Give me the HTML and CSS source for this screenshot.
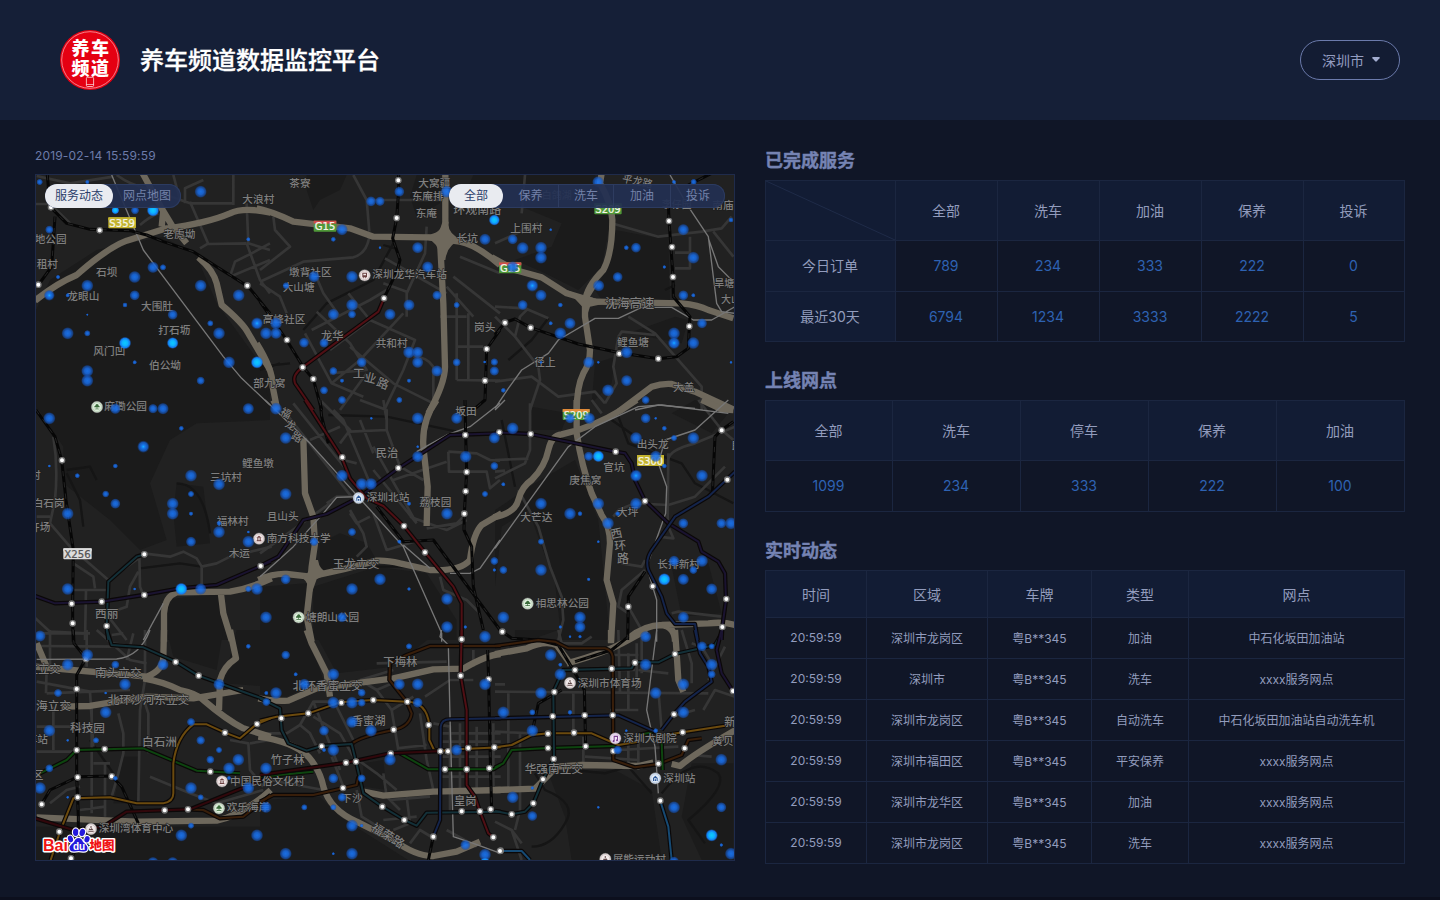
FILE: index.html
```html
<!DOCTYPE html>
<html lang="zh-CN">
<head>
<meta charset="utf-8">
<title>养车频道数据监控平台</title>
<link rel="stylesheet" href="styles.css">
</head>
<body>
<header class="header">
  <svg class="logo" viewBox="0 0 60 60">
    <circle cx="30" cy="30" r="30" fill="#e50012"/>
    <circle cx="30" cy="30" r="28.3" fill="none" stroke="#ffd9dc" stroke-width=".6"/>
    <g class="logo-text"><text x="11.5" y="25.3">养</text><text x="31" y="25.3">车</text><text x="11.5" y="45">频</text><text x="31" y="45">道</text></g>
    <rect x="26.4" y="47.3" width="7.2" height="9.2" rx="1" fill="#e50012" stroke="#fff" stroke-width=".7"/>
    <path d="M26.4 54.5h7.2" stroke="#fff" stroke-width=".6"/>
  </svg>
  <h1 class="title">养车频道数据监控平台</h1>
  <div class="city">深圳市<svg class="caret" viewBox="0 0 8 5"><path d="M.8 0h6.4q1 .3.3 1.2L4.8 4.3q-.8.7-1.6 0L.5 1.2Q-.2.3.8 0z" fill="#a3add0"/></svg></div>
</header>
<main class="main">
  <section class="left">
    <div class="date">2019-02-14 15:59:59</div>
    <div class="mapbox">
      <svg class="map" id="map" viewBox="36 175 698 685"></svg>
      <div class="pills">
        <div class="pill"><span class="on w68">服务动态</span><span class="w68">网点地图</span></div>
        <div class="pill"><span class="on w54">全部</span><span class="w55">保养</span><span class="w55 sep">洗车</span><span class="w57 sep">加油</span><span class="w55 sep">投诉</span></div>
      </div>
    </div>
  </section>
  <section class="right">
    <h2>已完成服务</h2>
    <div class="grid orders">
      <div class="h corner"><svg class="diag" viewBox="0 0 129 59"><path d="M0 0L129 59" stroke="#1f2b48"/></svg></div><div class="h">全部</div><div class="h">洗车</div><div class="h">加油</div><div class="h">保养</div><div class="h">投诉</div>
      <div class="h">今日订单</div><div>789</div><div>234</div><div>333</div><div>222</div><div>0</div>
      <div class="h">最近30天</div><div>6794</div><div>1234</div><div>3333</div><div>2222</div><div>5</div>
    </div>
    <h2>上线网点</h2>
    <div class="grid shops">
      <div class="h">全部</div><div class="h">洗车</div><div class="h">停车</div><div class="h">保养</div><div class="h">加油</div>
      <div>1099</div><div>234</div><div>333</div><div>222</div><div>100</div>
    </div>
    <h2>实时动态</h2>
    <div class="grid live">
      <div class="h">时间</div><div class="h">区域</div><div class="h">车牌</div><div class="h">类型</div><div class="h">网点</div>
      <div>20:59:59</div><div>深圳市龙岗区</div><div>粤B**345</div><div>加油</div><div>中石化坂田加油站</div>
      <div>20:59:59</div><div>深圳市</div><div>粤B**345</div><div>洗车</div><div>xxxx服务网点</div>
      <div>20:59:59</div><div>深圳市龙岗区</div><div>粤B**345</div><div>自动洗车</div><div>中石化坂田加油站自动洗车机</div>
      <div>20:59:59</div><div>深圳市福田区</div><div>粤B**345</div><div>平安保养</div><div>xxxx服务网点</div>
      <div>20:59:59</div><div>深圳市龙华区</div><div>粤B**345</div><div>加油</div><div>xxxx服务网点</div>
      <div>20:59:59</div><div>深圳市龙岗区</div><div>粤B**345</div><div>洗车</div><div>xxxx服务网点</div>
    </div>
  </section>
</main>
<script src="map.js"></script>
</body>
</html>
```
FILE: styles.css
```css
* { box-sizing: border-box; }
body {
  margin: 0;
  height: 900px;
  overflow: hidden;
  background: #101627;
  color: #929cbd;
  font-family: Inter, "Noto Sans CJK SC", sans-serif;
  border-bottom: 3px solid #0c0f1d;
}
.header {
  height: 120px;
  padding: 0 40px 0 60px;
  display: flex;
  align-items: center;
  background: #151f37;
}
.logo { width: 60px; height: 60px; }
.logo-text { font: 900 18px "Noto Sans CJK SC", sans-serif; fill: #fff; }
.title {
  margin: 0 auto 0 20px;
  padding-top: 2px;
  font-size: 24px;
  line-height: 36px;
  font-weight: 500;
  -webkit-text-stroke: .3px #fff;
  color: #fff;
}
.city {
  width: 100px;
  height: 40px;
  padding: 0 0 1px 21px;
  display: flex;
  align-items: center;
  gap: 8px;
  border: 1px solid #6b7aab;
  border-radius: 20px;
  background: #131c33;
  font-size: 14px;
  color: #939dc0;
}
.caret { width: 8px; height: 5px; }
.main { display: flex; gap: 30px; padding: 20px 35px 0; }
.left { width: 700px; }
.date { height: 34px; line-height: 31px; font-size: 12px; letter-spacing: .16px; color: #6c7ba9; }
.mapbox {
  display: grid;
  height: 687px;
  border: 1px solid #1f2b4b;
  background: #212121;
}
.mapbox > * { grid-area: 1 / 1; }
.map { display: block; width: 698px; height: 685px; }
.pills {
  z-index: 1;
  display: flex;
  justify-content: space-between;
  align-items: flex-start;
  padding: 9px;
}
.pill {
  display: flex;
  height: 24px;
  border-radius: 12px;
  background: rgba(34, 47, 82, .93);
  box-shadow: inset 0 0 0 1px #2c3b60;
  font-size: 12px;
  line-height: 23px;
  text-align: center;
  color: #7381a9;
}
.on { border-radius: 12px; background: #e9ebf0; color: #2c3e6b; }
.sep { border-left: 1px solid #2e3c60; }
.w54 { width: 54px; }
.w55 { width: 55px; }
.w57 { width: 57px; }
.w68 { width: 68px; }
.right { width: 640px; }
h2 {
  margin: 0;
  height: 40px;
  line-height: 41px;
  font-size: 18px;
  font-weight: 700;
  -webkit-text-stroke: .4px #7583b3;
  color: #7583b3;
}
.grid {
  display: grid;
  gap: 1px;
  padding: 1px;
  margin-bottom: 18px;
  background: #1b2640;
  font-size: 14px;
  color: #2e62b2;
}
.grid > div {
  display: flex;
  align-items: center;
  justify-content: center;
  padding: 0 1px 1px 0;
  background: #101627;
}
.grid > .h { padding-bottom: 2px; background: #121c34; color: #929cbd; }
.grid > .corner { padding: 0; }
.diag { width: 100%; height: 100%; }
.orders { grid-template-columns: 129px 101px 101px 101px 101px 100px; grid-template-rows: 59px 50px 49px; }
.shops { grid-template-columns: 126px repeat(4, 127px); grid-template-rows: 59px 50px; }
.live {
  grid-template-columns: 100px 120px 103px 96px 215px;
  grid-template-rows: 46px repeat(6, 40px);
  font-size: 12px;
  color: #929cbd;
}
.live > div { padding: 0 0 2px; }
.live > .h { padding: 0; font-size: 14px; }
.label { font-family: "Noto Sans CJK SC", sans-serif; font-weight: 500; fill: #7f7f7f; stroke: #1b1b1b; paint-order: stroke; stroke-width: 3px; }
.shield-text { font: 29px "DejaVu Sans", sans-serif; text-anchor: middle; stroke-width: .7px; }
.baidu { font-family: "Liberation Sans", "Noto Sans CJK SC", sans-serif; font-weight: 700; fill: #f01414; stroke: #fff; stroke-width: 3px; paint-order: stroke; stroke-linejoin: round; }
```
FILE: map.js
```js
const root = document.getElementById('map');
const NS = 'http://www.w3.org/2000/svg';
function el(name, attrs, parent) {
  const node = document.createElementNS(NS, name);
  for (const k in attrs) node.setAttribute(k, attrs[k]);
  (parent || root).appendChild(node);
  return node;
}
const defs = el('defs', {});
defs.innerHTML = `
<radialGradient id="d0"><stop offset="0" stop-color="#1a76f2" stop-opacity=".92"/><stop offset=".45" stop-color="#1869e0" stop-opacity=".88"/><stop offset=".8" stop-color="#1555bc" stop-opacity=".62"/><stop offset="1" stop-color="#0d3b90" stop-opacity="0"/></radialGradient>
<radialGradient id="d1"><stop offset="0" stop-color="#16b4ff"/><stop offset=".25" stop-color="#1779f0"/><stop offset=".7" stop-color="#155cc8" stop-opacity=".85"/><stop offset="1" stop-color="#0d3b90" stop-opacity="0"/></radialGradient>
<radialGradient id="d2"><stop offset="0" stop-color="#0dcbff"/><stop offset=".45" stop-color="#0fb0ff"/><stop offset=".75" stop-color="#1480f8" stop-opacity=".95"/><stop offset="1" stop-color="#1458c0" stop-opacity="0"/></radialGradient>`;

// Tiles are drawn at three units per pixel, from these origins.
const origin = {A:[30,170],B:[260,170],C:[495,170],D:[30,400],E:[260,400],F:[495,400],G:[30,630],H:[260,630],I:[495,630]};
const place = t => `translate(${origin[t]}) scale(.33333)`;

function layer(data, attrs) {
  for (const t in data) el('path', Object.assign({d: data[t], transform: place(t), fill: 'none', 'stroke-linejoin': 'round'}, attrs));
}

el('rect', {x: 36, y: 175, width: 698, height: 685, fill: '#212121'});
const hills = {
  A:'M18 420L60 330L200 240L270 225L400 200L500 260L560 400L720 620L720 720L18 720ZM380 215L500 250L485 300L455 280L430 310Z',
  B:'M140 15L260 15L240 60L180 90L160 120L140 60ZM470 15L540 15L540 100L470 140L450 80ZM640 15L720 15L720 110L620 60ZM0 600L30 700L0 720Z',
  C:'M0 15L300 15L345 160L320 290L250 360L150 310L60 270L170 230L200 160L80 110L0 100ZM360 180L470 200L520 200L525 400L320 390L300 360L345 280ZM540 440L580 450L560 520L400 490ZM300 580L360 560L350 640L290 700Z',
  D:'M18 0L720 0L720 60L500 70L420 120L360 250L410 420L330 450L240 360L100 250L100 140L20 20ZM440 250L520 260L540 430L440 440L430 340ZM400 600L560 580L600 720L410 720Z',
  E:'M180 430L240 400L320 430L350 480L180 520ZM160 560L350 500L500 520L590 660L590 720L160 720ZM0 560L140 550L130 720L0 720Z',
  F:'M0 330L120 250L240 180L310 360L330 560L345 720L200 720L180 550L100 330L20 380L0 560ZM110 20L220 40L200 90L110 90ZM530 40L600 0L700 40L650 100ZM530 500L640 490L680 640L560 650Z',
  G:'M620 0L720 0L720 170L580 160ZM410 0L580 0L560 120L430 80ZM280 380L330 380L320 520L250 520ZM18 590L720 590L720 700L18 700Z',
  H:'M0 0L140 0L190 150L80 200L0 200ZM160 0L540 0L400 110L230 130ZM310 400L370 390L380 480L310 470ZM0 510L180 500L240 560L460 700L0 700Z',
  I:'M60 0L190 0L120 25L60 25ZM160 430L360 420L470 480L500 690L230 690L210 560ZM300 500L440 520L410 590L340 570ZM590 400L715 400L715 690L620 690L560 560Z'
};
layer(hills, {fill: '#1b1b1b'});
layer({B:'M130 480L200 400L340 330L400 220M0 600L60 580M370 225L405 235M0 590L90 580', C:'M160 445L110 510L40 570M540 345L510 360', D:'M110 220L150 300L160 380M330 505L450 490L515 500M110 210L180 200L200 240M440 250Q520 250 540 400', E:'M205 45L380 50L590 95M350 500L500 500', F:'M20 60L60 260M370 50L400 130L560 190L600 250L715 310M350 60L480 150', G:'M180 330L250 430', I:'M120 430L150 480Q250 520 210 580Q170 650 110 650M240 420L330 430L400 410L470 490M500 490Q590 370 670 430Q700 470 580 570L630 640'}, {stroke: '#151515', 'stroke-width': 7});

layer({
  A:'M260 15Q300 45 350 55L480 100L610 100M610 15L610 105M465 100L465 55L520 30M480 95L535 222L650 220M430 15L450 90M600 320L615 275L665 250L720 220M535 220L510 235M650 100L655 220L720 240M650 220L690 330L720 370M600 320L720 270M18 102L60 102L120 160M330 165Q360 140 385 130M20 18L120 40L250 20',
  B:'M280 15L320 90L328 185M330 90L540 90M328 200Q320 250 280 262L130 275L0 335M40 140L45 180L90 230L0 300M160 300L190 370L240 440M375 265L490 330L560 370M500 170L495 250L440 370L440 440M265 370L330 450L465 510L430 600L375 715M155 480L330 390L380 360M170 425L270 520L320 600L210 610M135 490L215 640L310 680M215 640L300 570L430 430M330 450L210 540M270 530L400 640L520 700M460 560Q500 560 520 590L520 720M590 530L670 530M590 630L720 632M590 370L590 630M625 430L625 630M560 350L640 440M600 260L720 310M580 320L720 430M540 440L620 440M320 610L240 720M0 340L60 380L80 430M440 365L370 340',
  C:'M90 15L80 130M0 220L130 160M350 160L490 200L620 185L680 175L710 140M655 185L715 260M585 200L585 295L540 295M540 248L585 248M0 410L90 415L160 445M60 500L75 440L100 415M0 440L60 500L130 590L135 630L105 720M0 635L110 620L190 680L300 665L330 700M370 500L380 485L480 495M370 500L355 590L365 640L330 700M400 440L480 490L620 650L620 720',
  D:'M70 110Q85 200 75 300L60 370L120 440L235 540L340 465M60 350L20 350M130 490L190 530L195 565M120 570L235 570M168 570L165 720M0 640L60 695L168 700M328 465L330 560L340 585M340 460L420 470L460 455L500 475L515 500L515 560M515 500L560 490L600 470M325 515L300 560L290 620L235 640M235 650L290 720M245 705L280 700M600 470L725 440',
  E:'M70 30L290 310M100 10L260 210M150 120L240 80M180 0L270 90L240 130M300 0L380 30L380 90L420 200L490 240M220 30L250 60L330 250M270 95L380 90M300 60L340 160M290 190L250 180M370 0L380 60M340 140L470 370M450 350L560 390L620 360M200 310L230 290L300 290M270 330L310 400L320 440L290 470M270 340L290 370L330 350M340 340L380 450L480 420M565 155L650 160L690 180L720 182M565 155L567 215L680 215L690 265L720 240M400 240L560 185M340 210L470 370M210 310L0 460M500 385L590 370L620 340M540 530L550 570L620 600L660 640',
  F:'M105 10L105 150L90 190L0 235M0 180L100 176M0 215L30 212M70 270L130 380L165 500L200 590L205 660L190 720M290 0L320 40M610 0L680 90L715 120M380 490L440 500L450 480M450 510L380 570L370 620L400 640M355 350L370 330L420 310L520 315L600 290L690 200M520 380L535 415L490 410M520 160L518 360M520 180Q520 150 600 130L720 80M400 620L440 690M530 640L550 635L680 650',
  G:'M20 10L180 10M20 48L260 50M60 0L60 110M170 0L170 110M200 0L245 40L320 50M245 40L300 90L350 100M20 155L180 185L300 180M50 110L48 190M50 190L180 185L190 350M185 230L185 550M20 290L190 290M70 230L70 360M265 250L280 310L280 370L265 430L245 500M345 0L345 150L330 240L325 520M345 220L355 250L355 370M20 365L140 365M360 440L480 490L560 520L700 480M190 400L240 400M60 520L110 480L150 470M150 540L225 530M600 330L655 340L660 420L700 470M660 340L720 330M225 400L225 560M290 90L310 10',
  H:'M0 310L80 310L120 285L160 215L210 215M120 285L150 310L180 370M160 215L240 420M220 210L280 330M160 260L240 310L280 380L350 430L410 480M300 150L350 180L395 240L415 360M395 240L460 200M350 180L420 150M495 200L570 150L640 150M520 280L570 290L570 550M600 280L600 480M650 290L650 480M700 280L700 480M540 310L722 310M540 335L722 335M540 380L722 380M540 440L722 440M410 355L500 345M480 250L500 390L520 480M370 430L380 500L420 540M390 510L510 500M440 500L450 580L400 600M370 570L470 560M450 640L480 600L530 630M560 600L650 650M350 100L560 95M640 60L640 110M30 450L190 480M290 480L305 560L370 600M300 150L400 120M215 380L250 470',
  I:'M0 185L640 190M0 163L30 163M40 190L40 480M190 0L200 40L260 40L290 20M370 0L375 190M400 70L400 240M425 40L425 180M440 0L440 130M350 75L430 75M345 120L420 120M345 240L430 240M235 190L235 320M75 305L75 540L60 600M430 120L520 130M490 180L500 300M590 40L620 50L650 100M560 0L590 100L590 160M625 240L660 180L720 200M640 150L690 50M400 330L400 400M430 330L430 420M370 360L550 350M590 375L650 380M0 305L110 310M270 380L430 390M0 575L50 600L80 640M50 600L80 690M530 260L600 240M265 320L265 405'
}, {stroke: '#363636', 'stroke-width': 8});

layer({
  A:'M15 392Q80 340 140 315Q230 235 290 212L410 175Q530 160 600 130Q640 110 722 128M338 10L395 115L425 165L470 220M400 120L395 170M505 262Q550 300 560 340L575 405Q640 460 655 490L720 600',
  B:'M-10 115Q40 125 100 155L270 175L340 200L505 202L600 215Q650 225 720 285M556 10L556 160L540 210L550 400L555 590Q555 640 505 730M-10 520Q40 600 38 650L52 720',
  C:'M-10 262L60 300L140 322L215 370L300 395L560 400Q610 405 640 420L715 445M320 10L315 40Q350 100 352 150Q352 250 325 300Q275 350 270 395L270 440L285 540Q285 580 265 610Q245 650 245 725M370 725L470 650Q500 640 530 642L600 665L715 718',
  D:'M402 725L402 640Q405 590 440 577L600 575Q660 565 725 535M572 575L580 640L605 722',
  E:'M40 0L50 20M130 115L135 280L160 350L165 430L155 500L150 560L140 650L155 725M-5 540Q40 520 80 522L150 530Q250 510 350 482Q380 480 420 490L510 510Q600 515 630 480Q640 400 665 375L725 340M530 0Q485 60 490 140L503 260L500 378',
  F:'M-5 352Q60 340 70 300Q80 260 110 240Q150 200 160 150Q170 105 200 103L250 90Q340 60 425 0M245 0L245 100Q260 200 290 280L320 345Q345 380 345 430L335 540L355 610L348 725M620 0L680 28L715 30M400 715Q450 675 500 675L640 670Q690 665 720 675M500 675Q540 680 540 725',
  G:'M20 40L50 110M15 110L350 140Q400 120 400 80L402 0M340 145Q400 155 450 180Q500 190 520 210Q590 270 640 295L722 320M95 230L180 228L350 200L490 205L640 180M600 0L618 85Q580 110 570 150L567 240M20 562L320 575L560 572Q640 555 722 480',
  H:'M140 0L155 40L200 130L210 200M-5 205Q40 215 85 212L170 175L400 145L520 118L610 116Q680 75 722 72M-5 320Q100 335 145 380Q180 420 190 470Q210 540 290 575L400 630Q470 680 520 678L590 665L660 635M310 485L370 497L520 485L722 480',
  I:'M0 72L95 55Q150 30 185 45L225 100M215 100Q330 70 400 30L455 0M348 0L348 40M540 0L545 70L550 150L565 185M0 480L120 476L185 410L260 405L430 408L475 398M530 402L555 408Q600 370 722 300'
}, {stroke: '#6e685c', 'stroke-width': 19});
layer({B:'M500 195Q545 190 548 155L566 155Q560 190 605 210Q562 220 556 270L540 270Q540 220 500 205Z', C:'M215 360L262 378L310 340L285 380L340 398L285 410L272 450L262 410Z', E:'M130 530Q150 520 156 480L174 480Q178 510 205 520L170 538L155 580L146 580Q148 550 130 536Z'}, {fill: '#6e685c'});

const thin = {
  A:'M245 15L340 240L580 560L635 625L720 705',
  C:'M720 430L680 425L665 400L640 200L580 110L525 15M640 205L670 290L720 340M0 715L40 655L80 600L160 550L190 510L300 445L370 445L440 412L530 412L595 450L650 450L720 410M420 720L490 705L600 715',
  D:'M340 720L400 610',
  E:'M15 0L150 130L430 440L545 700L545 725M290 290L230 292L190 340L100 440L0 530M430 435L510 505M570 520L630 520L660 505L720 420M470 155L560 105L630 80L720 10',
  F:'M0 445L220 140L300 80L430 20L500 15L700 40M700 0L600 90L510 120L490 190L515 260L512 340L455 500L485 600L485 725M0 30L30 0',
  G:'M360 0Q330 80 260 87L20 88', H:'M545 0L540 20L565 45L570 260L580 620L640 640L722 670', I:'M485 0L455 240L480 350L490 490'
};
layer(thin, {stroke: '#777', 'stroke-width': 4});
const rail = {
  A:'M52 15L60 110L110 160L180 178L300 182L350 195L400 215L490 245L560 290L655 350L720 430M75 140L65 290L25 345',
  B:'M416 15L416 60L410 145L398 205L420 270L412 300L372 385M0 395L80 510L130 592L160 628L185 720M720 480L680 537L675 690L640 720',
  C:'M520 100L522 150L534 320L535 380L585 440L583 468L580 535L545 560L490 566L373 548L250 522L107 473L60 447L30 457L0 495M580 45L650 10',
  D:'M18 30L75 110L95 180L108 300L130 450L128 610L128 670L130 725',
  E:'M180 0L185 50L205 130M615 0L617 105L620 215L613 340L612 390L635 440L640 560L670 690M350 320L430 425L520 420L720 690',
  F:'M715 65L680 90L660 110L652 285M450 515L400 590L398 720',
  G:'M130 0L132 40L168 85L140 135L140 440L145 560L145 600M35 522L60 480L145 440L245 438L275 470L325 580M123 685L150 640',
  H:'M683 60L686 150L690 350L695 540M520 620L505 690',
  I:'M22 5L50 25L130 30L190 45L235 120M240 95L350 60L400 20M200 180L130 220L115 290M235 120L268 180L272 350'
};
layer(rail, {stroke: '#060606', 'stroke-width': 9});
layer(rail, {stroke: '#242424', 'stroke-width': 3, 'stroke-dasharray': '16 18'});

const metro = [
  ['#381e0a', {G:'M470 538L520 540L570 565L640 560L722 495', H:'M0 515L40 495L160 495L290 465L295 440M275 342Q300 320 400 300Q450 290 455 250L440 215L388 150L390 100L440 75L510 48L722 48', I:'M0 48L130 30L180 35L220 55L330 55Q350 60 353 80L355 390L420 412L490 402L560 375L580 330L620 325'}],
  ['#0d450f', {G:'M30 430L110 390L140 360L340 355L500 422L630 430', H:'M0 440L160 425M420 370L505 418L700 418L722 405', I:'M0 412L25 400L50 360L160 354L360 348M430 315L480 305M500 340L503 420'}],
  ['#6b4a0e', {G:'M62 690L90 605L130 505L240 502L320 520L400 520Q430 515 430 490L430 400Q440 320 490 283L530 283L585 308L630 325L680 282L722 265', H:'M0 272L50 260L145 250L240 217L340 210L440 215Q500 215 508 285L508 330L522 360L565 362M590 358L722 352', I:'M0 352L50 345L110 315L160 310L290 310L370 345L430 335M480 320L563 307L690 287'}],
  ['#31070b', {G:'M15 565L130 600L220 590L290 545L480 538L722 440', H:'M0 435L260 398L390 370L550 363'}],
  ['#133038', {D:'M343 463L320 470L235 545L230 680L235 720', G:'M230 0L245 45L340 52L437 95L505 137L722 215', H:'M0 205L60 235L65 300L85 340L140 362L185 348L275 342L288 395L310 490L367 530L433 570L470 587L500 548L722 545', I:'M0 543L50 553L90 545L115 520L145 447L177 387L175 185L205 120L410 115L420 97L490 97L540 72L660 45L680 10'}],
  ['#1a1330', {D:'M15 588L75 610L215 605L340 585L450 565L560 555L722 485', E:'M0 498L55 470L130 360L200 342L295 293L415 205L570 105L720 100', F:'M0 97L107 102L362 155L390 160L410 190L420 240L450 302L520 370L610 425L620 455L670 485L690 520L693 600L682 680L680 720', I:'M680 0L665 60L680 130L715 185'}],
  ['#14244b', {F:'M720 215L640 290L540 350L470 450Q450 480 460 510L500 590L515 640L540 672L600 672L608 720', H:'M520 620L540 570L542 290Q545 268 570 268L722 265', I:'M0 265L370 256L480 305M500 300L537 252L570 215L650 155L640 110L615 70L600 0'}],
  ['#500f14', {B:'M372 385L355 425L205 535L128 592Q95 615 105 640L160 720', E:'M135 0L245 172L270 235L320 295L370 318L432 378L495 457L580 560L605 610L605 725', H:'M605 0L602 136L620 240L620 465L645 500L660 545L685 610L700 622'}],
  ['#164a73', {I:'M495 510L520 590L530 690M15 663L80 663L105 690'}]
];
for (const [color, data] of metro) {
  layer(data, {stroke: '#0b0808', 'stroke-width': 13});
  layer(data, {stroke: color, 'stroke-width': 6});
}

const stations = {
  A:'63,112 209,181 25,344 652,347', B:'415,31 410,144 372,385 81,510 128,592 160,627 680,537 675,632',
  C:'522,153 531,231 534,321 583,469 490,566 373,551 107,473 30,458', D:'96,181 343,463 343,585 692,498 125,611 215,605 128,670 230,678',
  E:'247,172 415,204 432,378 495,457 616,105 620,216 617,274 613,341 605,718', F:'13,97 107,102 362,155 450,303 697,239 680,91 473,559 400,620 694,597 682,681 22,695',
  G:'168,87 437,96 506,137 140,177 140,360 224,357 143,442 245,439 35,523 143,502 88,605 404,541 474,538 585,308 681,282 541,425 123,685',
  H:'602,137 686,148 244,218 340,210 442,215 64,265 145,250 401,299 506,285 185,349 392,371 258,398 288,395 541,364 564,364 625,354 703,352 555,418 620,418 688,415 249,474 367,530 433,570 605,544 660,544 692,538 520,620 700,622 722,662',
  I:'540,72 420,98 240,120 350,116 178,186 173,259 269,256 353,256 537,253 714,183 159,311 237,308 563,307 159,354 272,349 355,363 569,355 176,387 144,448 490,401 115,520 50,553 496,512 15,663'
};
for (const t in stations) {
  const g = el('g', {transform: place(t)});
  for (const p of stations[t].split(' ')) {
    const [cx, cy] = p.split(',');
    el('circle', {cx, cy, r: 8, fill: '#fff', stroke: '#777', 'stroke-width': 4}, g);
  }
}

// left edge, vertical centre, text, size, rotation
const labels = {
  A:[[637,86,'大浪村',32],[400,193,'老虎坳',32],[14,206,'地公园',32],[20,281,'租村',32],[198,307,'石坝',32],[112,378,'龙眼山',32],[333,407,'大围肚',32],[385,479,'打石坜',32],[190,543,'风门凹',32],[357,584,'伯公坳',32]],
  B:[[88,40,'茶寮',32],[475,40,'大窝疆',32],[455,78,'东庵排',32],[467,129,'东庵',32],[580,118,'环观南路',36],[590,204,'长坑',32],[87,307,'墩背社区',32],[68,351,'大山塘',32],[337,313,'深圳龙华汽车站',32],[8,446,'高峰社区',32],[183,498,'龙华',34],[347,520,'共和村',32],[642,470,'岗头',32],[-20,639,'部九窝',32],[586,722,'坂田',32]],
  C:[[382,24,'平龙路',31,12],[140,75,'白鸽湖',30],[500,102,'李仔园',30],[652,104,'南庙',32],[46,173,'上围村',32],[330,400,'沈海高速',37],[658,341,'旱塘',30],[678,388,'大山',30],[366,516,'鲤鱼塘',32],[118,575,'径上',32],[534,650,'大盖',32]],
  D:[[223,19,'麻磡公园',32],[0,225,'村',32],[636,190,'鲤鱼墩',32],[540,231,'三坑村',32],[8,310,'白石岗',32],[-3,381,'开场',32],[560,364,'福林村',32],[596,458,'木运',32],[195,642,'西丽',35]],
  E:[[347,159,'民治',34],[20,348,'且山头',32],[20,414,'南方科技大学',32],[320,292,'深圳北站',32],[478,306,'荔枝园',32],[218,491,'玉龙立交',35],[138,650,'塘朗山公园',32],[64,32,'福',32,28],[78,68,'龙',32,28],[96,104,'路',32,28]],
  F:[[425,133,'出头龙',32],[325,200,'官坑',32],[223,240,'庚焦窝',32],[76,350,'大芒达',32],[366,336,'大坪',32],[346,404,'西',36,-12],[358,439,'环',36,-6],[366,475,'路',36]
  ,[487,493,'长排新村',32],[122,609,'相思林公园',32],[708,134,'良',32]],
  G:[[-10,116,'立立交',34],[195,129,'南头立交',35],[233,208,'北环沙河东立交',35],[18,228,'海立交',35],[120,294,'科技园',35],[-10,326,'车站',32],[336,335,'白石洲',35],[5,433,'区',35],[600,452,'中国民俗文化村',32],[590,532,'欢乐海岸',32],[206,594,'深圳湾体育中心',32]],
  H:[[370,96,'下梅林',34],[98,167,'北环香蜜立交',35],[275,274,'香蜜湖',34],[32,391,'竹子林',34],[244,504,'下沙',32],[582,513,'皇岗',34],[338,588,'福荣路',36,32]],
  I:[[248,158,'深圳市体育场',32],[385,323,'深圳大剧院',32],[505,443,'深圳站',32],[89,415,'华强南立交',35],[353,686,'展能运动村',32],[688,275,'新',34],[652,332,'黄贝岭',32]]
};
for (const t in labels) {
  const g = el('g', {transform: place(t), class: 'label'});
  for (const [x, y, s, size, rot] of labels[t]) {
    const node = el('text', {x, y: y + size * .36, 'font-size': size}, g);
    if (rot) node.setAttribute('transform', `rotate(${rot} ${x} ${y})`);
    node.textContent = s;
  }
}
const road = el('g', {transform: place('B'), class: 'label'});
for (const [x, y, s, r] of [[278,610,'工',0],[314,620,'业',14],[352,634,'路',22]])
  el('text', {x, y: y + 13, 'font-size': 36, transform: `rotate(${r} ${x} ${y})`}, road).textContent = s;

const shields = [['A',235,142,83,'S359','#c3b32e','#c3b32e'],['B',161,152,68,'G15','#d24b4b','#4f9838'],['C',12,277,67,'G15','#d24b4b','#4f9838'],['C',298,100,82,'S209','#4f9838','#4f9838'],['F',203,27,81,'S209','#e08a38','#4f9838'],['F',426,165,81,'S300','#c3b32e','#c3b32e'],['D',100,445,85,'X256','#ddd','#ddd']];
for (const [t, x, y, w, s, top, main] of shields) {
  const g = el('g', {transform: place(t)});
  el('rect', {x, y, width: w, height: 33, rx: 3, fill: main}, g);
  el('rect', {x, y, width: w, height: 9, fill: top}, g);
  const ink = s === 'X256' ? '#555' : '#f5f5e8';
  el('text', {x: x + w / 2, y: y + 29, textLength: w - 6, lengthAdjust: 'spacingAndGlyphs', class: 'shield-text', fill: ink, stroke: ink}, g).textContent = s;
}

const glyph = {
  park: ['#3a6b3a', '#dfeedd', 'M-7 7H7V5H-7ZM-1 5V1H-8Q-9-3-5-4Q-4-9 0-9Q5-9 5-4Q9-3 8 1H1V5Z'],
  metro: ['#2b5797', '#dfe9f5', 'M-7 8V-1L0-8L7-1V8H4V0H-4V8ZM-2 3H2V8H-2Z'],
  bus: ['#6a4040', '#f0e6e6', 'M-7-8H7V6H4V9H2V6H-2V9H-4V6H-7ZM-4-5V0H4V-5Z'],
  sport: ['#5c4444', '#f2ebeb', 'M-8 5H8V8H-8ZM-7 3L-4-2L-1 1L2-3L7 3ZM-2-8H2V-4H-2Z'],
  museum: ['#6a4040', '#f0e6e6', 'M-8-3L0-9L8-3ZM-7 5H7V8H-7ZM-6-2H-4V5H-6ZM-1-2H1V5H-1ZM4-2H6V5H4Z'],
  music: ['#7a3f8f', '#f0e3f5', 'M-4-8H8V5A3 3 0 1 1 5 3V-4H-2V7A3 3 0 1 1-5 5V-8Z']
};
for (const [t, x, y, kind] of [['B',314,316,'bus'],['D',201,21,'park'],['E',116,652,'park'],['F',98,611,'park'],['G',567,535,'park'],['E',296,294,'metro'],['I',481,445,'metro'],['D',687,416,'museum'],['G',576,454,'museum'],['G',183,597,'sport'],['I',225,159,'sport'],['I',331,687,'sport'],['I',361,325,'music']]) {
  const g = el('g', {transform: `${place(t)} translate(${x} ${y})`});
  const [ink, paper, d] = glyph[kind];
  el('circle', {r: 17, fill: paper, stroke: '#8a8a8a', 'stroke-width': 1.5}, g);
  el('circle', {r: 13.5, fill: 'none', stroke: ink, 'stroke-width': 1, opacity: .6}, g);
  el('path', {d, fill: ink, 'fill-rule': 'evenodd'}, g);
}

// x, y, radius; h = warm centre, b = bright
const dots = {
  A:'29,36,8 172,36,5 512,65,17 256,121,10b 315,121,11 369,121,17b 58,179,11 655,208,5 369,292,16 399,292,8 314,321,17 84,321,5 172,347,17 58,376,15h 113,376,5 314,376,14 512,347,17 626,376,17 285,405,6 428,434,14 172,434,2 541,460,8 681,460,17h 708,490,17 567,490,17 113,490,17 172,490,8 285,519,17b 428,519,16b 314,577,5 597,577,17 681,577,17b 172,603,17 172,632,17 512,632,11 256,716,15 369,716,13 399,716,16 655,716,16',
  B:'418,65,14 333,94,14 360,94,13 560,65,17 703,150,15b 246,179,16 220,208,6 675,208,16 360,233,3 473,233,16 503,291,16 162,320,16 276,320,17 78,347,9 531,376,13 276,405,17 447,405,16 590,405,8 220,433,16 276,433,11 390,433,16 48,460,17 48,490,16 132,518,14 192,519,13 447,547,17 473,547,16 473,577,16 305,577,14 590,577,11 220,603,11 531,603,16 246,632,5 447,632,5 192,661,11 246,690,11 418,690,8 674,576,3 703,576,10 703,603,13',
  C:'309,36,16 537,36,5 596,36,8 708,150,6 167,179,3 565,179,16 53,208,14 83,234,17 138,233,17 138,263,17 394,233,6 423,233,14 53,291,16 595,263,17 508,291,4 368,321,14 112,347,17h 311,347,16 138,376,16 565,376,14 595,376,5 83,405,14 196,405,6 167,460,5 225,460,16 621,460,14 196,490,17 537,490,17 537,519,17h 595,519,17 395,547,17 281,577,16 310,577,3 708,577,3 138,577,3 395,632,16 25,661,6 339,661,17 452,690,11',
  D:'58,55,17 454,85,6 340,140,17h 58,198,3 256,198,6 142,227,6 483,227,17 567,253,17 227,282,9 483,282,8 256,311,14 428,311,17 113,341,17 428,341,17 483,341,5 567,370,6 567,396,17 655,396,3 483,425,14 655,425,17 113,567,17 314,567,3 454,567,17b 512,567,16 655,567,8 681,567,17 708,652,17 30,708,16',
  E:'48,26,17 77,114,17 473,55,17 590,55,16 334,55,3 703,114,16 473,140,3 473,170,16 617,170,17 703,198,11 246,227,17 305,252,17 333,252,17 77,282,17 675,282,8 447,311,5 561,341,17 276,396,11 162,425,12 418,425,5 77,538,14 276,567,17 360,538,17 447,567,4 703,483,11 703,510,4 561,597,17 246,652,14 561,681,17 616,681,4 675,710,17',
  F:'53,85,17 452,55,14 225,55,14 283,55,16 482,55,3 508,85,6 537,114,8 423,114,17 595,114,17 281,169,13 310,169,16b 482,169,16 508,198,6 423,227,17h 621,227,17 25,253,5 138,311,17 310,311,17 423,311,17 225,341,17 255,341,6 368,341,6 339,370,17 565,370,14 679,370,14 708,370,17 310,425,3 138,425,8 537,483,15 621,483,17 595,510,11 25,510,11 138,510,17 281,538,4 508,538,17b 565,538,16 650,567,16 25,652,17 255,652,17 255,681,16 196,681,4 565,652,16 225,710,3 255,710,4 452,710,16',
  G:'172,75,17 113,104,17 256,104,11 399,104,16 655,49,6 285,163,17 567,163,16 84,189,11 227,189,3 709,189,5 709,216,11 227,247,17 483,276,11 58,302,17 113,331,3 198,331,8 512,331,12 567,360,8 541,389,11 625,389,17 597,415,17 597,444,5 58,415,11 30,474,17 483,474,17 655,474,17 256,445,6 512,502,8 113,502,3 708,415,17 708,532,16 483,587,8 454,616,17 681,616,17 369,698,16 428,698,16',
  H:'77,75,12 107,133,5 220,133,17 447,49,8 133,163,16 305,188,11 48,189,17 418,163,16 473,163,17 675,163,17 220,218,17 276,218,17 305,218,11 473,218,14 276,276,17 192,302,14 333,302,17 192,360,5 220,360,17 590,360,16 390,389,17 220,445,14 305,445,11 246,502,12 133,532,8 220,532,8 276,587,17 305,587,4 220,671,3 77,671,17 276,671,17 616,645,14 675,674,17 675,698,14b',
  I:'167,75,17 196,104,5 196,133,17 452,104,17 621,49,14 650,49,8 650,104,17 650,133,11 565,163,17 482,189,17 138,189,17 25,247,17 112,247,8 225,247,6 565,247,17 112,302,17 394,302,3 482,302,6 368,360,12 679,389,17 53,502,17 112,474,4 112,558,14 310,532,3 537,532,17 679,532,14 650,616,17b 679,645,4 708,671,17 537,695,14'
};
for (const t in dots) {
  const g = el('g', {transform: place(t)});
  for (const d of dots[t].split(' ')) {
    const [cx, cy, r] = d.split(',');
    const kind = r.endsWith('b') ? 2 : r.endsWith('h') ? 1 : 0;
    el('circle', {cx, cy, r: parseInt(r, 10) + 2, fill: `url(#d${kind})`}, g);
  }
}

const brand = el('g', {class: 'baidu'});
el('text', {x: 43, y: 850.5, 'font-size': 17, textLength: 25, lengthAdjust: 'spacingAndGlyphs'}, brand).textContent = 'Bai';
el('text', {x: 89.5, y: 850, 'font-size': 12.5, 'font-weight': 900}, brand).textContent = '地图';
const paw = el('g', {});
paw.innerHTML = `<g fill="#2319dc" stroke="#fff" stroke-width="2.4" paint-order="stroke"><ellipse cx="70.5" cy="839" rx="2.5" ry="3.4" transform="rotate(-20 70.5 839)"/><ellipse cx="75.7" cy="832.2" rx="2.7" ry="3.7"/><ellipse cx="82.3" cy="832.5" rx="2.7" ry="3.7" transform="rotate(15 82.3 832.5)"/><ellipse cx="87" cy="839.3" rx="2.5" ry="3.2" transform="rotate(20 87 839.3)"/><path d="M78.5 838Q81.500 838 83 842Q87.500 845.500 87.500 848Q87.500 852 83 851.500Q78.500 850.500 74.500 851.500Q69.500 852 69.500 847.500Q69.500 845.500 74 842Q75.500 838 78.500 838Z"/></g>
<text x="73" y="850" font-family="Liberation Sans" font-weight="700" font-size="10" fill="#fff">du</text>`;
```
